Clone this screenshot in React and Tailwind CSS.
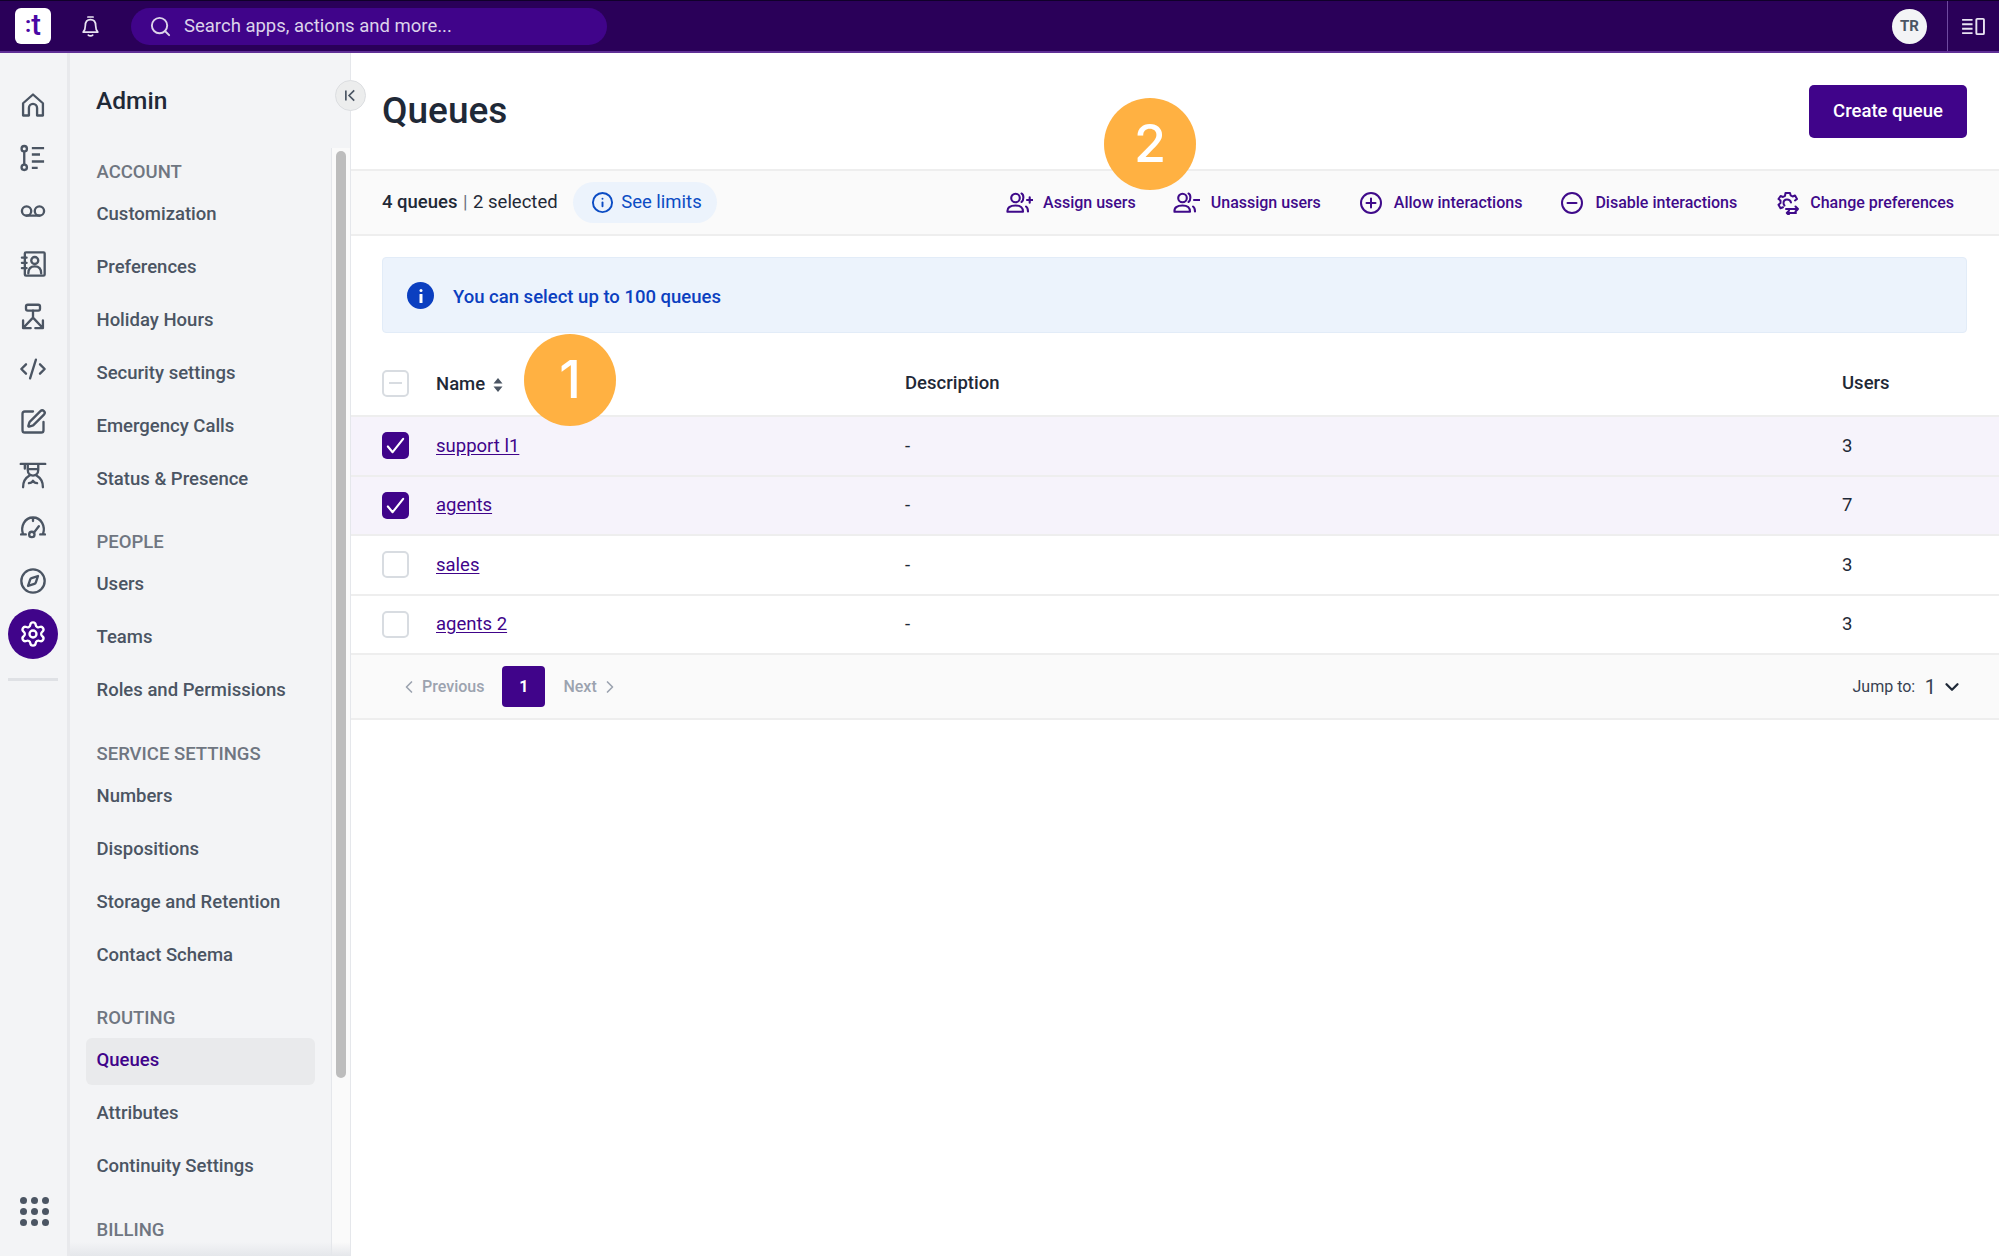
import { ChevronDown, ChevronLeft, ChevronRight, CodeXml, Compass, Info, Search, Settings, SquarePen } from 'lucide-react';

const navGroups = [
  { title: 'ACCOUNT', items: ['Customization', 'Preferences', 'Holiday Hours', 'Security settings', 'Emergency Calls', 'Status & Presence'] },
  { title: 'PEOPLE', items: ['Users', 'Teams', 'Roles and Permissions'] },
  { title: 'SERVICE SETTINGS', items: ['Numbers', 'Dispositions', 'Storage and Retention', 'Contact Schema'] },
  { title: 'ROUTING', items: ['Queues', 'Attributes', 'Continuity Settings'] },
  { title: 'BILLING', items: [] },
];

const queues = [
  { name: 'support l1', users: 3, selected: true },
  { name: 'agents', users: 7, selected: true },
  { name: 'sales', users: 3, selected: false },
  { name: 'agents 2', users: 3, selected: false },
];

function Svg({ children, className = 'w-[28px] h-[28px]', strokeWidth = 2 }) {
  return (
    <svg viewBox="0 0 24 24" fill="none" stroke="currentColor" strokeWidth={strokeWidth} strokeLinecap="round" strokeLinejoin="round" className={className}>
      {children}
    </svg>
  );
}

const HomeIcon = () => (
  <Svg>
    <path d="M3.500 21V10.500L12 3l8.500 7.500V21h-5v-6.500a3.500 3.500 0 0 0-7 0V21z" />
  </Svg>
);

const FlowList = () => (
  <Svg>
    <circle cx="4.500" cy="4" r="2.300" />
    <circle cx="4.500" cy="20" r="2.300" />
    <path d="M4.500 6.300v11.400M11 3.500h10.500M11 9h7M11 15h10.500M11 20.500h5" strokeLinecap="butt" />
  </Svg>
);

const VoicemailIcon = () => (
  <Svg>
    <circle cx="6.500" cy="12" r="4" />
    <circle cx="17.500" cy="12" r="4" />
    <path d="M6.500 16h11" />
  </Svg>
);

const ContactBook = () => (
  <Svg>
    <rect x="5" y="2" width="17" height="20" rx="1" />
    <path d="M2.500 6.500h4M2.500 11h4M2.500 15.500h4" />
    <circle cx="13.500" cy="9" r="3" />
    <path d="M8 20c0-4 2-6 5.500-6s5.500 2 5.500 6" />
  </Svg>
);

const Routing = () => (
  <Svg>
    <rect x="6" y="1.500" width="12" height="5" rx="1.500" />
    <path d="M12 6.500v6L4 21M12 12.500L20 21M3.500 15v6.500H10M20.500 15v6.500H14" />
  </Svg>
);

const Agent = () => (
  <Svg>
    <path d="M1.500 2.500h21M5 2.500v4M7.500 2.500v5c0 3 2 5 4.500 5s4.500-2 4.500-5v-5M7.500 7h9" />
    <path d="M3.500 22.500c0-5 2-8 5.500-10M20.500 22.500c0-5-2-8-5.500-10M8.500 19c2 0 3-1 3.500-2 .5 1 1.500 2 3.500 2" />
  </Svg>
);

const Gauge = () => (
  <Svg>
    <path d="M3.500 17.500C1 10.500 5 3 12 3s11 7.500 8.500 14.500M1.800 17.500h4M18.200 17.500h4M12 3v3" />
    <circle cx="11" cy="17.500" r="2.300" />
    <path d="M12.800 16L17 10.500" />
  </Svg>
);

const BellIcon = () => (
  <svg viewBox="0 0 22 26" fill="none" stroke="currentColor" strokeWidth="2" strokeLinecap="round" strokeLinejoin="round" className="w-[19px] h-[25px]">
    <path d="M8 2h6M11 5c-4 0-6 3-6 7 0 3-1 6-2.500 7.500h17C18 18 17 15 17 12c0-4-2-7-6-7z" />
    <path d="M8.500 23c1.200 1.300 3.800 1.300 5 0" />
  </svg>
);

const UserAction = ({ minus }) => (
  <svg viewBox="0 0 27 21" fill="none" stroke="currentColor" strokeWidth="2.100" strokeLinecap="round" strokeLinejoin="round" className="w-[27px] h-[21px]">
    <circle cx="9.500" cy="6" r="4.300" />
    <path d="M1.500 19.800c-.5-4 2.500-6.300 8-6.300 5 0 7.500 2 7.500 6.300z" />
    <path d="M15.500 1.500c2.500 1 2.500 7 0 8.500M20 14.500c1.500 1 2 3 2 5" />
    {minus ? <path d="M21 8h5.500" /> : <path d="M21 8h5.500M23.700 5.200v5.600" />}
  </svg>
);

const GearArrows = () => (
  <svg viewBox="0 0 24 24" fill="none" stroke="currentColor" strokeWidth="2" strokeLinejoin="round" strokeLinecap="round" className="w-[24px] h-[24px]">
    <path d="M20 9.500l2-1.500-2-3.500-2.400 1-2-1.200L15 2h-4.500l-.5 2.800-2 1.200-2.400-1L3.500 8l2 1.500v2.500l-2 1.700 2 3.500 2.500-1" />
    <path d="M16 11.500c-.5-2-2-3-4-3s-3.500 1.500-3.500 3.500c0 1 .5 2 1 2.500" />
    <path d="M11 18h12M20.500 15.500L23 18l-2.500 2.500M21 22H12M14 19.800L11.800 22l2.200 2" />
  </svg>
);

function Action({ icon, label, className = 'gap-[11px]' }) {
  return (
    <button className={`flex items-center text-[16px] font-medium text-[#3f0a8a] ${className}`}>
      {icon}
      {label}
    </button>
  );
}

function Checkbox({ checked }) {
  if (checked) {
    return (
      <span className="w-[27px] h-[27px] rounded-[5px] bg-[#40048a] flex items-center justify-center text-white">
        <svg viewBox="0 0 24 24" fill="none" stroke="currentColor" strokeWidth="2.200" strokeLinecap="round" strokeLinejoin="round" className="w-[23px] h-[23px]">
          <path d="M4 13l5 6L20 5" />
        </svg>
      </span>
    );
  }
  return <span className="w-[27px] h-[27px] rounded-[5px] bg-white border-2 border-[#d8dce1]" />;
}

function Badge({ n, className }) {
  return (
    <div className={`absolute w-[92px] h-[92px] rounded-full bg-[#ffb142] text-white text-[52px] font-medium flex items-center justify-center font-['Inter',sans-serif] ${className}`}>
      {n}
    </div>
  );
}

export default function App() {
  const railIcons = [
    <HomeIcon key="home" />,
    <FlowList key="flow" />,
    <VoicemailIcon key="vm" />,
    <ContactBook key="book" />,
    <Routing key="routing" />,
    <CodeXml key="code" className="w-[28px] h-[28px]" strokeWidth={2} />,
    <SquarePen key="pen" className="w-[28px] h-[28px]" strokeWidth={2} />,
    <Agent key="agent" />,
    <Gauge key="gauge" />,
    <Compass key="compass" className="w-[28px] h-[28px]" strokeWidth={2} />,
  ];

  return (
    <div className="relative w-[1999px] h-[1256px] overflow-hidden flex flex-col bg-white font-['Roboto',sans-serif] text-[#1f2937]">
      {/* top bar */}
      <header className="h-[53px] shrink-0 bg-[#2a0059] border-t border-t-[#10002a] border-b-2 border-b-[#5f2f96] flex items-center pl-[15px]">
        <div className="w-[36px] h-[36px] rounded-[6px] bg-white flex items-center justify-center text-[#4a08a5] font-medium leading-none pb-[2px]">
          <span className="text-[22px] font-bold">:</span>
          <span className="text-[29px]">t</span>
        </div>
        <div className="ml-[30px] text-[#e9e3f2] flex"><BellIcon /></div>
        <div className="ml-[31px] w-[476px] h-[37px] rounded-full bg-[#40048a] flex items-center pl-[18px] text-[18.500px] text-[#dcd3ea]">
          <Search className="w-[23px] h-[23px]" strokeWidth={2} />
          <span className="ml-[12px] pt-[1px]">Search apps, actions and more...</span>
        </div>
        <div className="ml-auto w-[35px] h-[35px] rounded-full bg-[#f3f4f6] text-[#4b5563] text-[15px] font-bold flex items-center justify-center">TR</div>
        <div className="ml-[20px] w-[52px] h-full border-l border-l-[#6f4aa0] flex items-center justify-center text-[#e9e3f2]">
          <svg viewBox="0 0 26 20" fill="none" stroke="currentColor" strokeWidth="2" className="w-[25px] h-[19px]">
            <path d="M1 3h11M1 7.700h11M1 12.300h11M1 17h11" />
            <rect x="16" y="2" width="8" height="16" rx="1" />
          </svg>
        </div>
      </header>

      <div className="flex-1 flex min-h-0">
        {/* icon rail */}
        <nav className="w-[70px] shrink-0 bg-[#f3f4f6] border-r-[3px] border-r-[#e8e9ec] flex flex-col items-center text-[#4b5563] pt-[26px] pr-[1px]">
          {railIcons.map((icon) => (
            <div key={icon.key} className="h-[52.800px] w-full flex items-center justify-center">{icon}</div>
          ))}
          <div className="mt-[2px] w-[50px] h-[50px] rounded-full bg-[#40048a] text-white flex items-center justify-center">
            <Settings className="w-[28px] h-[28px]" strokeWidth={2} />
          </div>
          <div className="w-[50px] h-[3px] bg-[#dfe1e5] mt-[19px]" />
          <div className="mt-auto mb-[30px] grid grid-cols-3 gap-x-[4px] gap-y-[4px] ml-[2px]">
            {Array.from({ length: 9 }).map((_, i) => (
              <span key={i} className="w-[7px] h-[7px] rounded-full bg-[#4b5563]" />
            ))}
          </div>
        </nav>

        {/* admin menu */}
        <aside className="relative w-[281px] shrink-0 bg-[#f3f4f6] border-r border-r-[#e5e7eb] flex flex-col">
          <div className="h-[95px] shrink-0 pl-[26px] pt-[32px] text-[24.500px] leading-[32px] font-medium text-[#1f2937]">Admin</div>
          <div className="flex-1 flex min-h-0">
            <div className="w-[262px] shrink-0 border-r border-r-[#e5e7eb] overflow-hidden pl-[16px] pr-[16px] pt-[9px]">
              {navGroups.map((group) => (
                <div key={group.title} className="mb-[21.500px]">
                  <div className="h-[31px] pl-[10.500px] flex items-center text-[18.500px] font-medium text-[#6f7681]">{group.title}</div>
                  {group.items.map((item) => (
                    <div key={item} className="h-[53px] py-[3px]">
                      <div className={`h-full pl-[10.500px] rounded-[6px] flex items-center text-[18.500px] font-medium ${item === 'Queues' ? 'bg-[#e9eaec] text-[#40048a]' : 'text-[#4b5563]'}`}>
                        {item}
                      </div>
                    </div>
                  ))}
                </div>
              ))}
            </div>
            <div className="flex-1 bg-[#fafafa] pl-[4px] pt-[3px]">
              <div className="w-[10px] h-[927px] rounded-full bg-[#bdbdbd]" />
            </div>
          </div>
          <div className="absolute left-0 right-0 bottom-0 h-[14px] bg-gradient-to-b from-transparent to-[#e5e7eb]" />
          <button className="absolute right-[-16px] top-[27px] w-[31px] h-[31px] rounded-full bg-[#eceded] border border-[#dcdee1] flex items-center justify-center text-[#4b5563]">
            <svg viewBox="0 0 14 14" fill="none" stroke="currentColor" strokeWidth="1.800" className="w-[13px] h-[13px]">
              <path d="M2 1.500v11M11 1.500L5.500 7l5.500 5.500" />
            </svg>
          </button>
        </aside>

        {/* content */}
        <main className="flex-1 min-w-0 flex flex-col">
          <div className="h-[116px] shrink-0 pl-[31px] pr-[32px] flex items-center justify-between">
            <h1 className="text-[37px] font-medium text-[#1f2937]">Queues</h1>
            <button className="w-[158px] h-[53px] rounded-[5px] bg-[#40048a] text-white text-[18.500px] font-medium pt-[2px]">Create queue</button>
          </div>

          <div className="h-[67px] shrink-0 bg-[#fafafa] border-y-2 border-y-[#eeeeee] flex items-center pl-[31px] pr-[45px] text-[18.500px]">
            <span className="font-medium text-[#1f2937]">4 queues</span>
            <span className="mx-[5.500px] text-[#6b7280]">|</span>
            <span className="text-[#1f2937]">2 selected</span>
            <div className="ml-[15.500px] h-[41px] w-[144px] rounded-full bg-[#ecf3fc] flex items-center pl-[18px] text-[#0b4cc4]">
              <Info className="w-[23px] h-[23px]" strokeWidth={2} />
              <span className="ml-[7px]">See limits</span>
            </div>
            <div className="ml-auto flex items-center gap-[38px]">
              <Action icon={<UserAction />} label="Assign users" className="gap-[10px] mr-[-1px]" />
              <Action icon={<UserAction minus />} label="Unassign users" />
              <Action
                icon={
                  <Svg className="w-[24px] h-[24px]">
                    <circle cx="12" cy="12" r="10" />
                    <path d="M12 7.500v9M7.500 12h9" />
                  </Svg>
                }
                label="Allow interactions"
              />
              <Action
                icon={
                  <Svg className="w-[24px] h-[24px]">
                    <circle cx="12" cy="12" r="10" />
                    <path d="M7.500 12h9" />
                  </Svg>
                }
                label="Disable interactions"
              />
              <Action icon={<GearArrows />} label="Change preferences" />
            </div>
          </div>

          <div className="mt-[21px] ml-[31px] mr-[32px] h-[76px] shrink-0 rounded-[4px] bg-[#ecf3fc] border border-[#e2ecf8] flex items-center pl-[24px] text-[18.500px] font-medium text-[#0b3fc0]">
            <span className="w-[27px] h-[27px] rounded-full bg-[#0b3fc0] flex items-center justify-center text-white mt-[1px]">
              <svg viewBox="0 0 4 14" fill="currentColor" className="w-[4px] h-[14px]">
                <rect x="0.500" y="0" width="3" height="3" rx="1.500" />
                <rect x="0.500" y="5" width="3" height="9" rx="0.500" />
              </svg>
            </span>
            <span className="ml-[19px] pt-[6px]">You can select up to 100 queues</span>
          </div>

          {/* table */}
          <div className="grid grid-cols-[85px_469px_937px_1fr] text-[18.500px]">
            <div className="col-span-4 grid grid-cols-subgrid items-center h-[84px] pt-[18px] border-b-2 border-b-[#eeeeee] font-medium text-[#1f2937]">
              <div className="pl-[31px] flex">
                <span className="w-[27px] h-[27px] rounded-[5px] bg-white border-2 border-[#d8dce1] flex items-center justify-center">
                  <span className="w-[13px] h-[2px] bg-[#d8dce1]" />
                </span>
              </div>
              <div className="flex items-center gap-[8px] pt-[4px]">
                Name
                <svg viewBox="0 0 10 16" fill="#4b5563" className="w-[10px] h-[16px]">
                  <path d="M5 1l4.500 5.500h-9zM5 15L.500 9.500h9z" />
                </svg>
              </div>
              <div className="pt-[2px]">Description</div>
              <div className="pt-[2px]">Users</div>
            </div>
            {queues.map((q) => (
              <div key={q.name} className={`col-span-4 grid grid-cols-subgrid items-center h-[59.500px] border-b-2 border-b-[#eeeeee] text-[#1f2937] ${q.selected ? 'bg-[#f6f3fb]' : 'bg-white'}`}>
                <div className="pl-[31px] flex"><Checkbox checked={q.selected} /></div>
                <a className="text-[#40048a] underline underline-offset-2 pt-[2px]">{q.name}</a>
                <div className="pt-[2px]">-</div>
                <div className="pt-[2px]">{q.users}</div>
              </div>
            ))}
          </div>

          {/* pagination */}
          <div className="h-[65px] shrink-0 bg-[#fafafa] border-b-2 border-b-[#eeeeee] flex items-center pl-[48px] pr-[36px] text-[16px]">
            <div className="flex items-center text-[#9ca3af] font-medium">
              <ChevronLeft className="w-[20px] h-[20px]" strokeWidth={2} />
              <span className="ml-[3px]">Previous</span>
            </div>
            <div className="ml-[18px] w-[43px] h-[41px] rounded-[4px] bg-[#40048a] text-white font-bold flex items-center justify-center">1</div>
            <div className="ml-[18px] flex items-center text-[#9ca3af] font-medium">
              <span>Next</span>
              <ChevronRight className="ml-[3px] w-[20px] h-[20px]" strokeWidth={2} />
            </div>
            <div className="ml-auto flex items-center text-[#374151]">
              <span>Jump to:</span>
              <span className="ml-[9.500px] text-[20px]">1</span>
              <ChevronDown className="ml-[5px] w-[22px] h-[22px] text-[#1f2937]" strokeWidth={2.500} />
            </div>
          </div>
        </main>
      </div>

      {/* numbered callouts */}
      <Badge n="1" className="left-[524px] top-[334px]" />
      <Badge n="2" className="left-[1104px] top-[98px]" />
    </div>
  );
}
